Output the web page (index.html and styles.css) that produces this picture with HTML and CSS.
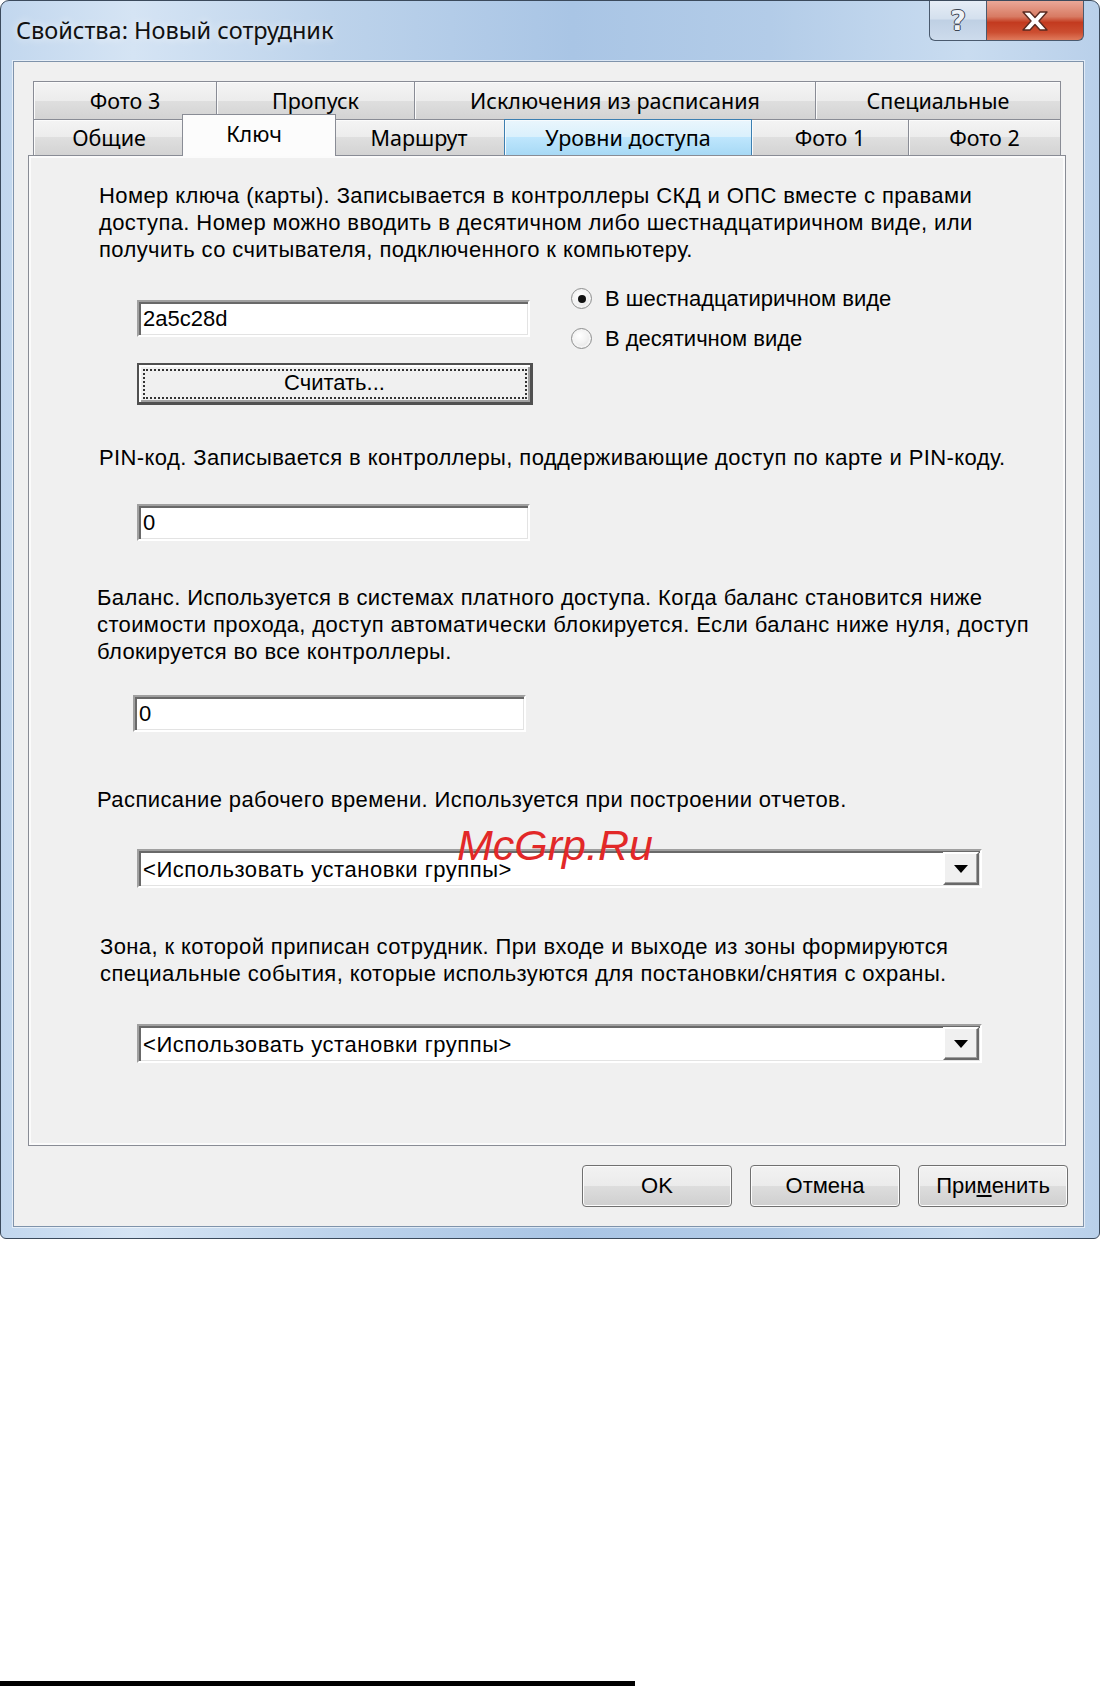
FILE: index.html
```html
<!DOCTYPE html>
<html lang="ru">

<head>
  <meta charset="UTF-8">
  <title>Свойства: Новый сотрудник</title>
  <link rel="stylesheet" href="styles.css">
</head>

<body>
  <div class="window">
    <div class="titlebar">
      <span class="title">Свойства: Новый сотрудник</span>
      <div class="caption-buttons">
        <span class="cap-btn cap-help">?</span>
        <span class="cap-btn cap-close">
          <svg width="30" height="22" viewBox="0 0 30 22">
            <path d="M3 2 H10 L15 7.5 L20 2 H27 L19 11 L27 20 H20 L15 14.5 L10 20 H3 L11 11 Z" fill="#fff" stroke="#5a2a20" stroke-width="1.4" stroke-linejoin="round"/>
          </svg>
        </span>
      </div>
    </div>

    <div class="client">
      <div class="tabs">
        <div class="tab-row row-top">
          <div class="tab">Фото 3</div>
          <div class="tab">Пропуск</div>
          <div class="tab">Исключения из расписания</div>
          <div class="tab">Специальные</div>
        </div>
        <div class="tab-row row-bottom">
          <div class="tab">Общие</div>
          <div class="tab active">Ключ</div>
          <div class="tab">Маршрут</div>
          <div class="tab hover">Уровни доступа</div>
          <div class="tab">Фото 1</div>
          <div class="tab">Фото 2</div>
        </div>
      </div>

      <div class="panel">
        <p class="hint hint-key">Номер ключа (карты). Записывается в контроллеры СКД и ОПС вместе с правами<br>доступа. Номер можно вводить в десятичном либо шестнадцатиричном виде, или<br>получить со считывателя, подключенного к компьютеру.</p>

        <div class="key-row">
          <div class="key-fields">
            <div class="edit">2a5c28d</div>
            <div class="btn-classic">Считать...</div>
          </div>
          <div class="radios">
            <div class="radio"><span class="radio-mark checked"></span>В шестнадцатиричном виде</div>
            <div class="radio"><span class="radio-mark"></span>В десятичном виде</div>
          </div>
        </div>

        <p class="hint hint-pin">PIN-код. Записывается в контроллеры, поддерживающие доступ по карте и PIN-коду.</p>
        <div class="edit edit-pin">0</div>

        <p class="hint hint-balance">Баланс. Используется в системах платного доступа. Когда баланс становится ниже<br>стоимости прохода, доступ автоматически блокируется. Если баланс ниже нуля, доступ<br>блокируется во все контроллеры.</p>
        <div class="edit edit-balance">0</div>

        <p class="hint hint-schedule">Расписание рабочего времени. Используется при построении отчетов.</p>
        <div class="combo combo-schedule">
          <span class="combo-text">&lt;Использовать установки группы&gt;</span>
          <span class="combo-arrow"></span>
        </div>

        <p class="hint hint-zone">Зона, к которой приписан сотрудник. При входе и выходе из зоны формируются<br>специальные события, которые используются для постановки/снятия с охраны.</p>
        <div class="combo combo-zone">
          <span class="combo-text">&lt;Использовать установки группы&gt;</span>
          <span class="combo-arrow"></span>
        </div>
      </div>

      <div class="footer">
        <button class="btn">OK</button>
        <button class="btn">Отмена</button>
        <button class="btn">При<span class="accel">м</span>енить</button>
      </div>
    </div>

    <div class="watermark">McGrp.Ru</div>
  </div>

  <div class="page-rule"></div>
</body>

</html>
```

FILE: styles.css
```css
* {
  box-sizing: border-box;
}

body {
  margin: 0;
  background: #fff;
  color: #000;
  font-family: 'Liberation Sans', Arial, sans-serif;
}

/* окно */
.window {
  position: relative;
  width: 1100px;
  height: 1239px;
  display: flex;
  flex-direction: column;
  padding: 0 15px 11px 12px;
  border: 1px solid #3b4a5c;
  border-radius: 9px 9px 6px 6px;
  background: linear-gradient(to right, #c2d7ee 0%, #d5e4f4 12%, #bdd3eb 30%, #a9c5e5 52%, #b3cce8 70%, #c9dcf0 88%, #b9d0ea 100%);
}

.titlebar {
  height: 60px;
  flex: none;
  display: flex;
  justify-content: space-between;
  align-items: flex-start;
}

.title {
  margin: 14px 0 0 3px;
  font-family: 'Noto Sans', 'Open Sans', sans-serif;
  font-size: 23.5px;
  line-height: 30px;
  color: #111;
  text-shadow: 0 0 8px rgba(255, 255, 255, .9);
}

.caption-buttons {
  display: flex;
}

.cap-btn {
  height: 40px;
  display: flex;
  align-items: center;
  justify-content: center;
  border: 1px solid #4a5a6e;
  border-top: none;
}

.cap-help {
  width: 57px;
  border-right: none;
  border-radius: 0 0 0 6px;
  background: linear-gradient(#e6edf6, #d4e0ee 45%, #bfd0e4 50%, #cddbec);
  font-family: 'DejaVu Sans', sans-serif;
  font-size: 27px;
  font-weight: bold;
  color: #eef2f7;
  text-shadow: 1px 0 0 #3c4552, -1px 0 0 #3c4552, 0 1px 0 #3c4552, 0 -1px 0 #3c4552;
}

.cap-close {
  width: 98px;
  border-radius: 0 0 6px 0;
  background: linear-gradient(#eaa898, #d87b63 40%, #c33a1f 55%, #cc4d30 80%, #df7a5c);
}

/* клиентская область */
.client {
  flex: 1;
  display: flex;
  flex-direction: column;
  padding: 19px 17px 0 14px;
  border: 1px solid #7f93ab;
  background: #f0f0f0;
  box-shadow: 0 0 0 1px rgba(255, 255, 255, .55);
}

/* вкладки */
.tabs {
  margin: 0 5px;
  font-family: 'Noto Sans', 'Open Sans', sans-serif;
  font-size: 21.5px;
}

.tab-row {
  display: grid;
  border-left: 1px solid #898c95;
}

.row-top {
  grid-template-columns: 183px 198px 401px 245px;
  height: 38px;
}

.row-bottom {
  grid-template-columns: 151px 149px 171px 247px 157px 152px;
  height: 36px;
}

.tab {
  display: flex;
  align-items: center;
  justify-content: center;
  border-top: 1px solid #898c95;
  border-right: 1px solid #898c95;
  background: linear-gradient(#f4f4f4, #ececec 50%, #dfdfdf 50%, #d3d3d3);
  box-shadow: inset 1px 1px 0 #fbfbfb;
  white-space: nowrap;
}

.tab.hover {
  border-color: #3c7fb1;
  background: linear-gradient(#eaf6fd, #d9f0fc 50%, #bee6fd 50%, #a7d9f5);
  box-shadow: -1px 0 0 #3c7fb1, inset 1px 1px 0 #f6fbfe;
}

.tab.active {
  position: relative;
  z-index: 1;
  margin: -5px -2px -1px -3px;
  padding: 0 10px 4px 0;
  border-left: 1px solid #898c95;
  background: #fcfcfc;
  box-shadow: none;
}

.panel {
  flex: 1;
  padding: 0 0 0 70px;
  border: 1px solid #898c95;
  background: #f0f0f0;
  box-shadow: inset 0 0 0 2px #fbfbfb;
  font-size: 22px;
}

.hint {
  margin: 0;
  line-height: 27px;
  letter-spacing: 0.4px;
  white-space: nowrap;
}

.hint-key { margin-top: 26px; }
.hint-pin { margin-top: 39px; }
.hint-balance { margin: 43px 0 0 -2px; letter-spacing: 0.38px; }
.hint-schedule { margin: 54px 0 0 -2px; }
.hint-zone { margin: 45px 0 0 1px; }

/* поля ввода */
.edit {
  width: 393px;
  height: 37px;
  padding: 0 4px;
  line-height: 33px;
  background: #fff;
  border: 2px solid;
  border-color: #a0a0a0 #fff #fff #a0a0a0;
  box-shadow: inset 2px 2px 0 #696969, inset -1px -1px 0 #e3e3e3;
}

.edit-pin { margin: 33px 0 0 38px; }
.edit-balance { margin: 30px 0 0 34px; }

.key-row {
  display: flex;
  margin-top: 22px;
}

.key-fields {
  width: 396px;
  margin-left: 38px;
  padding-top: 15px;
}

.btn-classic {
  width: 396px;
  height: 42px;
  margin-top: 26px;
  text-align: center;
  line-height: 36px;
  background: #f0f0f0;
  border: 2px solid #505050;
  border-right-width: 3px;
  border-bottom-width: 3px;
  box-shadow: inset 2px 2px 0 #fff, inset -2px -2px 0 #a0a0a0;
  outline: 2px dotted #333;
  outline-offset: -8px;
}

.radios {
  display: flex;
  flex-direction: column;
  gap: 13px;
  margin-left: 38px;
}

.radio {
  display: flex;
  align-items: center;
  line-height: 27px;
  white-space: nowrap;
}

.radio-mark {
  width: 21px;
  height: 21px;
  margin-right: 13px;
  border-radius: 50%;
  border: 1px solid #8e8f8f;
  background: radial-gradient(circle at 40% 35%, #fff 0%, #f2f2f2 45%, #d9d9d9 100%);
  box-shadow: inset 0 0 0 2px #f4f4f4;
  display: flex;
  align-items: center;
  justify-content: center;
}

.radio-mark.checked::after {
  content: '';
  width: 8px;
  height: 8px;
  border-radius: 50%;
  background: #111;
}

/* выпадающие списки */
.combo {
  width: 845px;
  height: 39px;
  margin-left: 38px;
  display: flex;
  align-items: stretch;
  justify-content: space-between;
  padding: 1px 1px 1px 4px;
  background: #fff;
  border: 2px solid;
  border-color: #a0a0a0 #fff #fff #a0a0a0;
  box-shadow: inset 2px 2px 0 #696969, inset -1px -1px 0 #e3e3e3;
}

.combo-schedule { margin-top: 36px; }
.combo-zone { margin-top: 37px; }

.combo-text {
  line-height: 35px;
  letter-spacing: 0.55px;
}

.combo-arrow {
  width: 36px;
  display: flex;
  align-items: center;
  justify-content: center;
  background: #f0f0f0;
  border: 2px solid;
  border-color: #fff #696969 #696969 #fff;
  box-shadow: inset -1px -1px 0 #a0a0a0;
}

.combo-arrow::after {
  content: '';
  border-left: 7px solid transparent;
  border-right: 7px solid transparent;
  border-top: 8px solid #000;
}

/* кнопки внизу */
.footer {
  height: 80px;
  flex: none;
  display: flex;
  justify-content: flex-end;
  gap: 18px;
  padding: 19px 0 0 0;
  margin-right: -2px;
}

.btn {
  width: 150px;
  height: 42px;
  padding: 0;
  font-family: 'Liberation Sans', Arial, sans-serif;
  font-size: 22px;
  color: #000;
  border: 1px solid #707070;
  border-radius: 4px;
  background: linear-gradient(#f2f2f2, #ebebeb 50%, #dddddd 51%, #cfcfcf);
  box-shadow: inset 0 0 0 1px #fcfcfc;
}

.accel {
  text-decoration: underline;
}

.watermark {
  position: absolute;
  left: 456px;
  top: 820px;
  z-index: 2;
  font-family: 'Liberation Sans', Arial, sans-serif;
  font-style: italic;
  font-size: 43px;
  color: #e22828;
}

.page-rule {
  width: 635px;
  height: 5px;
  margin-top: 442px;
  background: #000;
}
```
